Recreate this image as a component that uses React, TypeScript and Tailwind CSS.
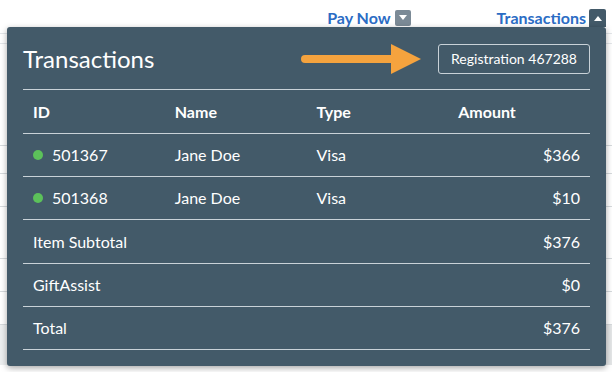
import React from 'react';

const rows = [
  { id: '501367', name: 'Jane Doe', type: 'Visa', amount: '$366' },
  { id: '501368', name: 'Jane Doe', type: 'Visa', amount: '$10' },
];

const totals = [
  { label: 'Item Subtotal', amount: '$376', h: 'h-[44px]' },
  { label: 'GiftAssist', amount: '$0', h: 'h-[43px]' },
  { label: 'Total', amount: '$376', h: 'h-[43px]' },
];

function Caret({ up }: { up?: boolean }) {
  return (
    <svg width="8" height="5" viewBox="0 0 8 5">
      {up ? <path d="M0 5 L4 0 L8 5 Z" fill="#fff" /> : <path d="M0 0 L8 0 L4 5 Z" fill="#fff" />}
    </svg>
  );
}

function Arrow() {
  return (
    <svg width="124" height="32" viewBox="0 0 124 32" className="mr-[13px]">
      <line x1="4" y1="16" x2="95" y2="16" stroke="#f5a33e" strokeWidth="8" strokeLinecap="round" />
      <path d="M90 1 L120 16 L90 31 Z" fill="#f5a33e" />
    </svg>
  );
}

export default function App() {
  return (
    <div className="relative w-[612px] h-[372px] bg-white overflow-hidden" style={{ fontFamily: 'Lato, "Noto Sans", sans-serif' }}>
      {/* top links */}
      <div className="flex justify-end items-center h-[33px] pr-[6px] pt-[2px]">
        <span className="text-[16px] font-bold text-[#2b6cc4]">Pay Now</span>
        <span className="ml-[4px] w-[16px] h-[16px] rounded-[2px] bg-[#7b8a96] flex items-center justify-center">
          <Caret />
        </span>
        <span className="ml-[86px] text-[16px] font-bold text-[#2b6cc4]">Transactions</span>
        <span className="ml-[3px] w-[17px] h-[18px] mt-[1px] rounded-t-[2px] bg-[#435a69] flex items-center justify-center">
          <Caret up />
        </span>
      </div>

      {/* page content behind the dropdown */}
      <div className="border-t border-[#e4e7ea]">
        <div className="h-[10px] border-b border-[#e4e7ea]" />
        <div className="h-[102px] border-b border-[#d6dadd]" />
        <div className="h-[28px] border-b border-[#d6dadd]" />
        <div className="h-[33px] border-b border-[#d6dadd]" />
        <div className="h-[52px] border-b border-[#d6dadd]" />
        <div className="h-[33px] border-b border-[#d6dadd]" />
        <div className="h-[33px] border-b border-[#d6dadd]" />
        <div className="flex h-[40px]">
          <div className="w-[190px] bg-[#eceeef] border-r-2 border-[#d3d8dc]" />
          <div className="flex-1 bg-[#e4e6e7]" />
        </div>
      </div>

      {/* dropdown panel */}
      <div className="absolute left-[7px] top-[27px] w-[599px] h-[339px] bg-[#435a69] rounded-[3px] shadow-[0_2px_6px_rgba(0,0,0,0.35)] px-[16px] text-white">
        <div className="flex items-center h-[63px] border-b border-[#c9d2d8] pt-[1px]">
          <h1 className="text-[24px] leading-none text-white">Transactions</h1>
          <div className="flex-1" />
          <Arrow />
          <div className="h-[30px] px-[12px] flex items-center border border-[#c9d2d8] rounded-[3px] text-[14px]">
            Registration 467288
          </div>
        </div>

        <div className="grid grid-cols-4 h-[44px] items-center border-b border-[#c9d2d8] text-[16px] font-bold">
          <div className="px-[10px]">ID</div>
          <div className="px-[10px]">Name</div>
          <div className="px-[10px]">Type</div>
          <div className="px-[10px]">Amount</div>
        </div>

        {rows.map((r) => (
          <div key={r.id} className="grid grid-cols-4 h-[43px] items-center border-b border-[#c9d2d8] text-[16px]">
            <div className="px-[10px] flex items-center">
              <span className="w-[10px] h-[10px] rounded-full bg-[#5cc15a] mr-[9px]" />
              {r.id}
            </div>
            <div className="px-[10px]">{r.name}</div>
            <div className="px-[10px]">{r.type}</div>
            <div className="px-[10px] text-right">{r.amount}</div>
          </div>
        ))}

        {totals.map((t) => (
          <div key={t.label} className={`flex justify-between ${t.h} items-center border-b border-[#c9d2d8] text-[16px] px-[10px]`}>
            <span>{t.label}</span>
            <span>{t.amount}</span>
          </div>
        ))}
      </div>
    </div>
  );
}
